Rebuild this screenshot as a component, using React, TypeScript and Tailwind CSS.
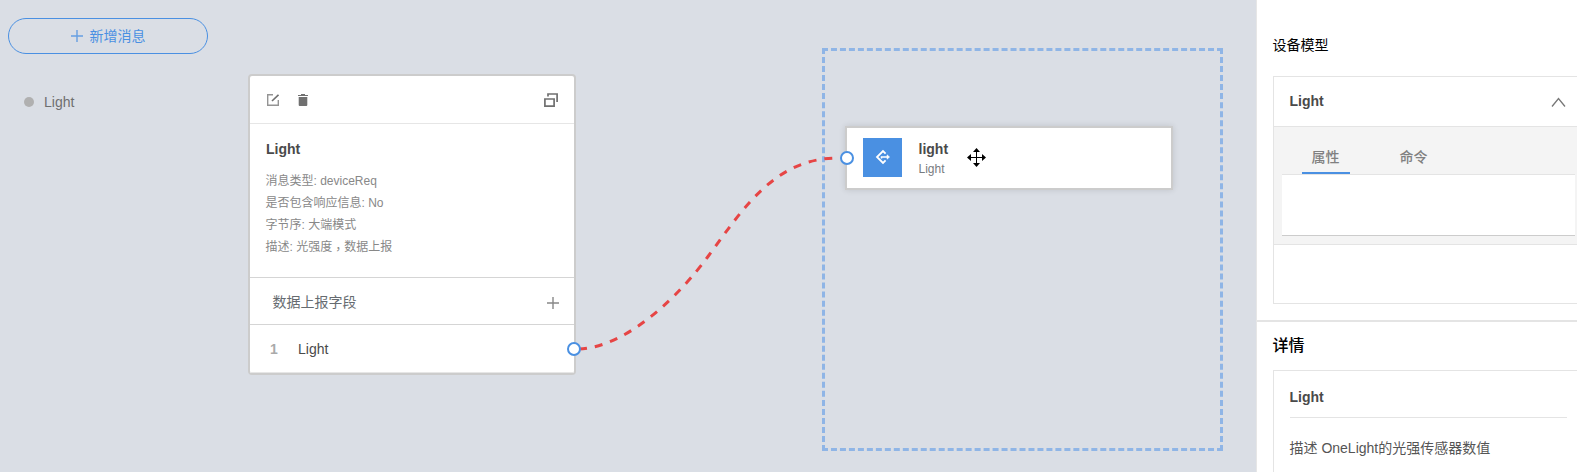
import React from "react";

const cjk = "font-['Liberation_Sans','Noto_Sans_CJK_SC',sans-serif]";

function Port({ className }: { className: string }) {
  return <span className={`absolute size-3.5 rounded-full border-2 border-[#4a90e2] bg-white ${className}`} />;
}

function PlusIcon({ className }: { className: string }) {
  return (
    <svg className={className} width="12" height="12" viewBox="0 0 12 12" fill="none" stroke="currentColor">
      <path d="M6 0V12M0 6H12" strokeWidth="1.4" />
    </svg>
  );
}

function MessageCard() {
  return (
    <section className="absolute left-[248px] top-[74px] flex h-[301px] w-[328px] flex-col rounded-[4px] border-2 border-[#ccc] bg-white">
      <header className="flex h-12 shrink-0 items-center border-b border-[#e6e6e6] pl-[17px] pr-4 text-[#707070]">
        <svg width="12" height="12" viewBox="0 0 12 12" fill="none" stroke="currentColor">
          <path d="M6 .7H.7V11.3H11.3V6" strokeWidth="1.4" opacity=".75" />
          <path d="M5 7L11.5 .8" strokeWidth="1.7" />
        </svg>
        <svg className="ml-[19px]" width="10" height="12" viewBox="0 0 10 12" fill="currentColor">
          <path d="M0 1H3V0H7V1H10V2H0ZM.7 3H9.3V11Q9.3 12 8.3 12H1.7Q.7 12 .7 11Z" />
        </svg>
        <svg className="ml-auto" width="14" height="14" viewBox="0 0 14 14" fill="none" stroke="currentColor">
          <path d="M4 3.5V1H13.1V9" strokeWidth="1.7" />
          <path d="M.9 6H10.1V13.1H.9Z" strokeWidth="1.7" />
        </svg>
      </header>
      <div className="h-[154px] shrink-0 border-b border-[#d5d5d5] px-4 pt-[14px]">
        <h2 className="text-sm font-bold leading-[22px] text-[#4a4a4a]">Light</h2>
        <div className="-ml-[0.5px] mt-[10px] text-xs leading-[22px] text-[#888]">
          <p>消息类型: deviceReq</p>
          <p>是否包含响应信息: No</p>
          <p>字节序: 大端模式</p>
          <p>
            描述: 光强度
            <span className="relative top-[3px] font-['Noto_Sans_CJK_TC',sans-serif] leading-none" lang="zh-TW">，</span>
            数据上报
          </p>
        </div>
      </div>
      <div className="flex h-[47px] shrink-0 items-center justify-between border-b border-[#d5d5d5] pl-[22.5px] pr-[15px] text-sm text-[#666b70]">
        <span className="mt-0.5">数据上报字段</span>
        <PlusIcon className="mt-1 text-[#888]" />
      </div>
      <div className="relative flex h-12 shrink-0 items-center border-b border-[#e6e6e6] pl-5 text-sm text-[#4a4a4a]">
        <b className="w-7 text-[#aaa]">1</b>
        <span>Light</span>
        <Port className="-right-[7px] top-[17px]" />
      </div>
    </section>
  );
}

function DeviceNode() {
  return (
    <section className="absolute left-[845px] top-[126px] flex h-16 w-[328px] items-center border-2 border-[#ccc] bg-white pl-4 shadow-[0_0_6px_rgba(0,0,0,0.12)]">
      <Port className="-left-[7px] top-[23px]" />
      <div className="-mt-0.5 grid size-[39px] place-items-center bg-[#4a90e2] text-white">
        <svg width="16" height="16" viewBox="0 0 16 16" fill="none" stroke="currentColor" strokeWidth="1.8">
          <path d="M10.6 4.6L8 2L2 8L8 14L10.6 11.4" />
          <path d="M6.5 9.6V8H13" strokeWidth="1.5" />
          <path d="M12 5.8L14.6 8L12 10.2Z" fill="currentColor" strokeWidth=".5" />
        </svg>
      </div>
      <div className="ml-[16.5px] mt-0.5">
        <h3 className="text-sm font-bold leading-5 text-[#4a4a4a]">light</h3>
        <p className="text-xs leading-5 text-[#777b80]">Light</p>
      </div>
    </section>
  );
}

function Canvas() {
  return (
    <main className="relative h-full w-[1256px] shrink-0 bg-[#dadee5]">
      <div className="flex flex-col px-2 pt-[18px]">
        <button className="flex h-9 w-[200px] items-center justify-center gap-[7px] rounded-full border border-[#4a90e2] text-sm text-[#4a90e2]">
          <PlusIcon className="opacity-80" />
          <span>新增消息</span>
        </button>
        <div className="mt-[38px] flex h-5 items-center gap-[10px] pl-4 text-sm text-[#6f6f6f]">
          <i className="size-2.5 rounded-full bg-[#b0b0b0]" />
          <span>Light</span>
        </div>
      </div>
      <div className="absolute left-[822px] top-[48px] h-[403px] w-[401px] border-[3px] border-dashed border-[#8fb5e6]" />
      <svg className="absolute inset-0" width="1256" height="472" fill="none">
        <path
          d="M579 349C629 347 682 292 708 256.5C743 209 775 157 840 158"
          stroke="#e64545"
          strokeWidth="3"
          strokeDasharray="8 8"
        />
      </svg>
      <MessageCard />
      <DeviceNode />
      <svg className="absolute left-[967px] top-[148px]" width="19" height="19" viewBox="0 0 19 19" fill="#000">
        <path d="M9 2H10V9H17V10H10V17H9V10H2V9H9Z" />
        <path d="M9.5 0L13 4H6ZM9.5 19L6 15H13ZM0 9.5L4 6V13ZM19 9.5L15 13V6Z" />
      </svg>
    </main>
  );
}

function SidePanel() {
  return (
    <aside className="flex h-full w-[321px] flex-col overflow-hidden border-l border-[#e6e6e6] bg-white">
      <div className="h-[322px] shrink-0 border-b-2 border-[#e4e4e4] pl-4 pt-[35px]">
        <h1 className="-ml-[0.5px] text-sm leading-5 text-black">设备模型</h1>
        <section className="mt-[21px] h-[228px] border-y border-l border-[#e4e4e4]">
          <header className="flex h-[49px] items-center justify-between pl-[15.5px] pr-[11px] text-sm font-bold text-[#4a4a4a]">
            <span className="-mt-0.5">Light</span>
            <svg width="15" height="10" viewBox="0 0 15 10" fill="none" stroke="#777">
              <path d="M1 9.5L7.5 1.5L14 9.5" strokeWidth="1.3" />
            </svg>
          </header>
          <div className="h-[119px] border-y border-[#e4e4e4] bg-[#f4f4f4] pl-2 pr-0.5">
            <nav className="flex h-[47px] gap-10 pl-5 text-sm text-[#808080]">
              <span className="h-full w-12 border-b-2 border-[#4a90e2] pr-px text-center font-medium leading-[61px]">属性</span>
              <span className="h-full w-12 pr-px text-center font-medium leading-[61px]">命令</span>
            </nav>
            <div className="h-[62px] border-b border-t border-b-[#ccc] border-t-[#e4e4e4] bg-white" />
          </div>
        </section>
      </div>
      <div className="pl-4 pt-[12px]">
        <h2 className="-ml-[0.5px] text-base font-medium leading-6 text-black">详情</h2>
        <section className="mt-[12px] h-[110px] border-l border-t border-[#e4e4e4] pl-4 pr-[10px]">
          <h3 className="h-[47px] border-b border-[#e4e4e4] pt-4 text-sm font-bold leading-5 text-[#4a4a4a]">
            <span className="-ml-[0.5px]">Light</span>
          </h3>
          <p className="-ml-[0.5px] mt-5 text-sm leading-5 text-[#555]">描述 OneLight的光强传感器数值</p>
        </section>
      </div>
    </aside>
  );
}

export default function App() {
  return (
    <div className={`flex h-[472px] w-[1577px] overflow-hidden ${cjk}`}>
      <Canvas />
      <SidePanel />
    </div>
  );
}
